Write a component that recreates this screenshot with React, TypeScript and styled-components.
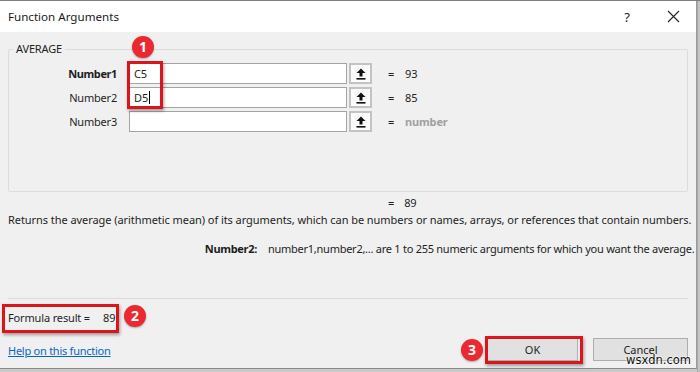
import styled, { createGlobalStyle } from "styled-components";

const Global = createGlobalStyle`
  html, body {
    margin: 0;
    padding: 0;
    background: #8c8c8c;
  }
  body {
    width: 700px;
    height: 372px;
    overflow: hidden;
    font-family: "Noto Sans", "Open Sans", sans-serif;
  }
`;

const Frame = styled.div`
  width: 700px;
  height: 372px;
  display: flex;
  background: #c9c9c9;
  border-top: 1px solid #7d7d7d;
  box-sizing: border-box;
`;

const Dialog = styled.div`
  position: relative;
  width: 697px;
  height: 368px;
  background: #f0f0f0;
  border-right: 1px solid #9a9a9a;
  border-bottom: 1px solid #8a8a8a;
  box-sizing: border-box;
  display: flex;
  flex-direction: column;
  color: #1e1e1e;
  font-size: 11px;
  line-height: 16px;
  letter-spacing: -0.15px;
`;

const EdgeStrip = styled.div`
  flex: 1;
  background: #c4c4c4;
  border-left: 1px solid #a8a8a8;
`;

const TitleBar = styled.div`
  height: 31px;
  flex: none;
  background: #ffffff;
  display: flex;
  align-items: center;
  padding-left: 8px;
  font-size: 11.6px;
  letter-spacing: 0;
  color: #1a1a1a;
`;

const TitleText = styled.span`
  flex: 1;
`;

const TitleButton = styled.span`
  width: 46px;
  display: flex;
  justify-content: center;
  align-items: center;
  font-size: 13px;
  color: #222;
`;

const Body = styled.div`
  flex: 1;
  padding: 0 8px;
  display: flex;
  flex-direction: column;
`;

const Group = styled.fieldset`
  margin: 9px 0 0;
  padding: 6px 0 0;
  height: 151px;
  box-sizing: border-box;
  border: 1px solid #dcdcdc;
  border-radius: 2px;
  min-width: 0;
`;

const Legend = styled.legend`
  margin-left: 4px;
  padding: 0 3px;
  color: #222;
`;

const ArgGrid = styled.div`
  display: grid;
  grid-template-columns: 120px 218px 25px 33px auto;
  row-gap: 3px;
  align-items: center;
`;

const ArgLabel = styled.div<{ $bold?: boolean }>`
  text-align: right;
  padding-right: 12px;
  font-weight: ${(p) => (p.$bold ? 700 : 400)};
  letter-spacing: ${(p) => (p.$bold ? "-0.4px" : "-0.2px")};
`;

const ArgInput = styled.div`
  height: 21px;
  background: #fff;
  border: 1px solid #a4a4a4;
  box-sizing: border-box;
  display: flex;
  align-items: center;
  padding-left: 4px;
`;

const Caret = styled.span`
  display: inline-block;
  width: 1px;
  height: 13px;
  background: #000;
  margin-left: 1px;
`;

const RefButton = styled.div`
  height: 21px;
  width: 23px;
  margin-left: 2px;
  box-sizing: border-box;
  border: 2px solid #c3c3c3;
  background: #fcfcfc;
  display: flex;
  align-items: center;
  justify-content: center;
`;

const Equals = styled.div`
  padding-left: 16px;
`;

const ArgValue = styled.div<{ $muted?: boolean }>`
  color: ${(p) => (p.$muted ? "#a0a0a0" : "#222")};
  font-weight: ${(p) => (p.$muted ? 700 : 400)};
`;

const ResultRow = styled.div`
  margin-top: 3px;
  padding-left: 380px;
  display: flex;
  gap: 10px;
`;

const Description = styled.div`
  margin-top: 1px;
  letter-spacing: -0.06px;
  white-space: nowrap;
`;

const HelpLine = styled.div`
  margin-top: 13px;
  display: flex;
  white-space: nowrap;
`;

const HelpName = styled.span`
  width: 260px;
  flex: none;
  text-align: right;
  font-weight: 700;
  padding-right: 11px;
  box-sizing: border-box;
  letter-spacing: -0.3px;
`;

const HelpText = styled.span`
  letter-spacing: -0.26px;
`;

const Separator = styled.div`
  margin-top: 41px;
  border-top: 1px solid #dadada;
`;

const Footer = styled.div`
  display: flex;
  justify-content: space-between;
  align-items: flex-end;
  padding-top: 11px;
`;

const FooterLeft = styled.div`
  display: flex;
  flex-direction: column;
  gap: 17px;
  padding-bottom: 2px;
`;

const FormulaResult = styled.div`
  display: flex;
  gap: 13px;
`;

const HelpLink = styled.a`
  color: #0a64c8;
  text-decoration: underline;
  letter-spacing: -0.25px;
`;

const ButtonRow = styled.div`
  display: flex;
  gap: 15px;
`;

const DlgButton = styled.div<{ $w: number }>`
  width: ${(p) => p.$w}px;
  height: 23px;
  box-sizing: border-box;
  border: 1px solid #adadad;
  background: #e1e1e1;
  display: flex;
  align-items: center;
  justify-content: center;
  letter-spacing: 0;
`;

const Callout = styled.div`
  position: absolute;
  box-sizing: border-box;
  border: 3px solid #dc141c;
  box-shadow: 1px 2px 3px rgba(0, 0, 0, 0.35);
  pointer-events: none;
`;

const Badge = styled.div`
  position: absolute;
  width: 22px;
  height: 22px;
  border-radius: 50%;
  background: #ea2a30;
  color: #fff;
  font-weight: 700;
  font-size: 14px;
  letter-spacing: 0;
  display: flex;
  align-items: center;
  justify-content: center;
  box-shadow: 0 1px 2px rgba(0, 0, 0, 0.3);
`;

const Watermark = styled.div`
  position: absolute;
  left: 626px;
  top: 352px;
  font-size: 11.5px;
  line-height: 14px;
  letter-spacing: 0;
  font-family: "DejaVu Sans", sans-serif;
  color: #111;
  text-shadow: 0 0 2px #fff, 0 0 2px #fff;
`;

function UpIcon() {
  return (
    <svg width="10" height="12" viewBox="0 0 10 12">
      <path d="M5 0.5 L9.5 5 H6.5 V8.5 H3.5 V5 H0.5 Z" fill="#111" />
      <rect x="0.5" y="10" width="9" height="1.6" fill="#111" />
    </svg>
  );
}

const args = [
  { name: "Number1", value: "C5", result: "93", bold: true },
  { name: "Number2", value: "D5", result: "85", caret: true },
  { name: "Number3", value: "", result: "number", muted: true }
];

export default function App() {
  return (
    <Frame>
      <Global />
      <Dialog>
        <TitleBar>
          <TitleText>Function Arguments</TitleText>
          <TitleButton>?</TitleButton>
          <TitleButton>
            <svg width="13" height="13" viewBox="0 0 13 13">
              <path d="M1 1 L12 12 M12 1 L1 12" stroke="#222" strokeWidth="1.1" />
            </svg>
          </TitleButton>
        </TitleBar>
        <Body>
          <Group>
            <Legend>AVERAGE</Legend>
            <ArgGrid>
              {args.flatMap((a) => [
                <ArgLabel key={a.name + "l"} $bold={a.bold}>
                  {a.name}
                </ArgLabel>,
                <ArgInput key={a.name + "i"}>
                  {a.value}
                  {a.caret ? <Caret /> : null}
                </ArgInput>,
                <RefButton key={a.name + "b"}>
                  <UpIcon />
                </RefButton>,
                <Equals key={a.name + "e"}>=</Equals>,
                <ArgValue key={a.name + "v"} $muted={a.muted}>
                  {a.result}
                </ArgValue>
              ])}
            </ArgGrid>
          </Group>
          <ResultRow>
            <span>=</span>
            <span>89</span>
          </ResultRow>
          <Description>
            Returns the average (arithmetic mean) of its arguments, which can be numbers or names, arrays, or references that contain numbers.
          </Description>
          <HelpLine>
            <HelpName>Number2:</HelpName>
            <HelpText>number1,number2,... are 1 to 255 numeric arguments for which you want the average.</HelpText>
          </HelpLine>
          <Separator />
          <Footer>
            <FooterLeft>
              <FormulaResult>
                <span>Formula result =</span>
                <span>89</span>
              </FormulaResult>
              <HelpLink>Help on this function</HelpLink>
            </FooterLeft>
            <ButtonRow>
              <DlgButton $w={91}>OK</DlgButton>
              <DlgButton $w={95}>Cancel</DlgButton>
            </ButtonRow>
          </Footer>
        </Body>
        <Callout style={{ left: 127, top: 60, width: 36, height: 48 }} />
        <Badge style={{ left: 132, top: 35 }}>1</Badge>
        <Callout style={{ left: 2, top: 303, width: 117, height: 29 }} />
        <Badge style={{ left: 124, top: 304 }}>2</Badge>
        <Callout style={{ left: 485, top: 335, width: 98, height: 28 }} />
        <Badge style={{ left: 461, top: 338 }}>3</Badge>
        <Watermark>wsxdn.com</Watermark>
      </Dialog>
      <EdgeStrip />
    </Frame>
  );
}
